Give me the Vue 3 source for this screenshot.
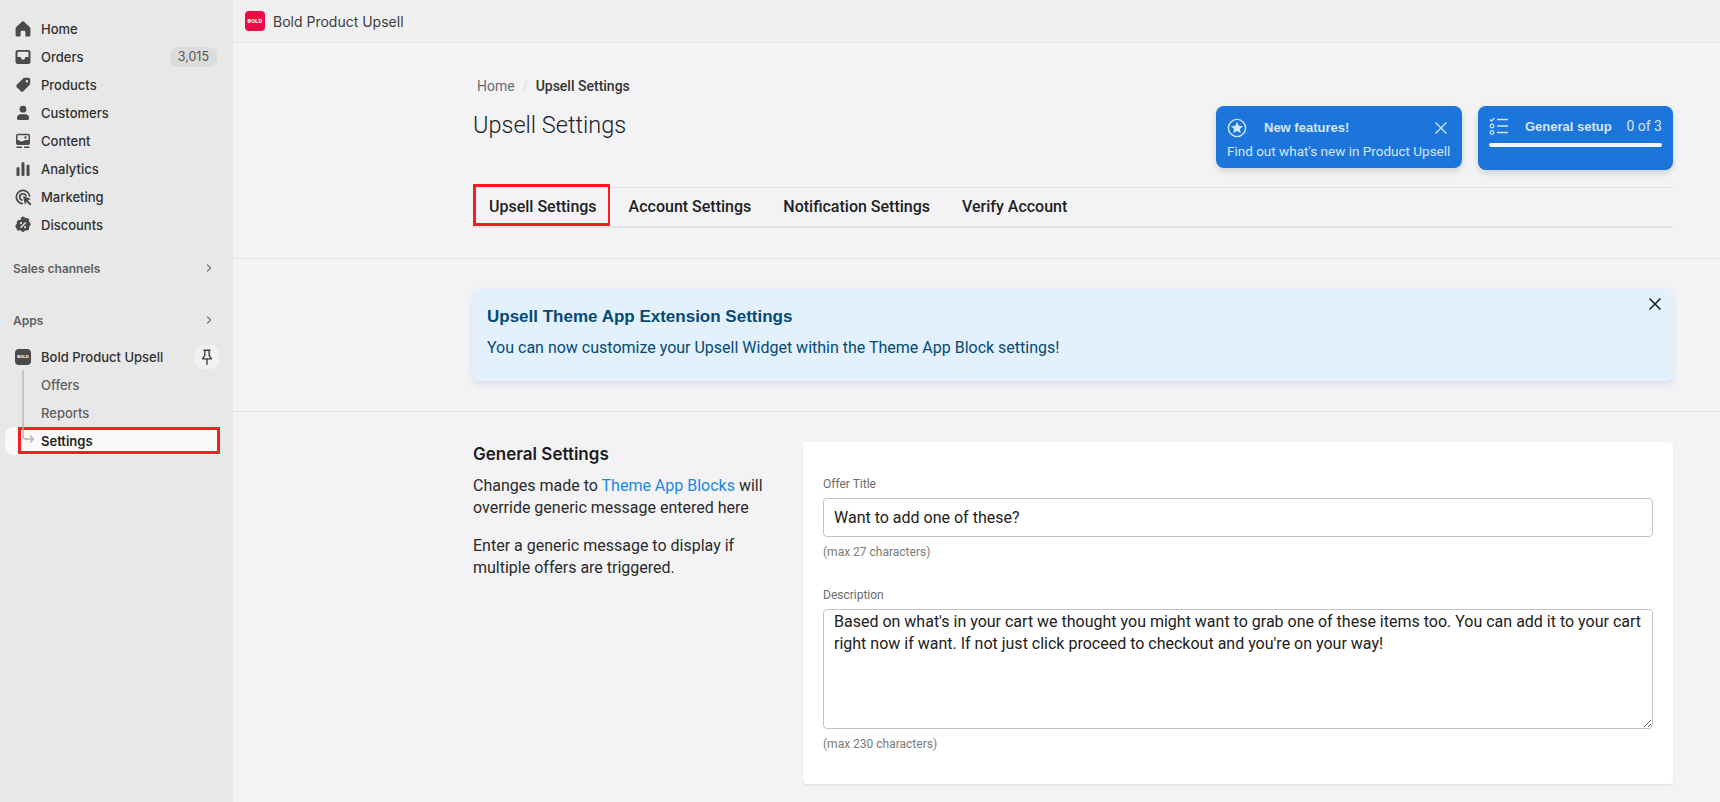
<template>
  <div class="page">
    <aside class="sidebar">
      <nav class="nav-main">
        <a v-for="item in navItems" :key="item.label" class="nav-item">
          <svg class="nav-icon" viewBox="0 0 20 20"><path :d="item.icon" fill="#4a4a4a" fill-rule="evenodd" /></svg>
          <span class="nav-label">{{ item.label }}</span>
          <span v-if="item.badge" class="badge">{{ item.badge }}</span>
        </a>
      </nav>

      <div class="section-head sales">
        <span>Sales channels</span>
        <svg viewBox="0 0 20 20" class="chev"><path d="M8 6l4 4-4 4" fill="none" stroke="#6b6b6b" stroke-width="1.4" stroke-linecap="round" stroke-linejoin="round" /></svg>
      </div>
      <div class="section-head apps">
        <span>Apps</span>
        <svg viewBox="0 0 20 20" class="chev"><path d="M8 6l4 4-4 4" fill="none" stroke="#6b6b6b" stroke-width="1.4" stroke-linecap="round" stroke-linejoin="round" /></svg>
      </div>

      <div class="app-block">
        <div class="app-row">
          <span class="app-logo"><span>BOLD</span></span>
          <span class="app-name">Bold Product Upsell</span>
          <span class="pin">
            <svg viewBox="0 0 20 20" width="18" height="18"><path d="M6.500 2.500h7M7.800 2.500l-.3 6-2.500 3.500h10l-2.500-3.500-.3-6M10 12v6" fill="none" stroke="#3a3a3a" stroke-width="1.500" stroke-linecap="round" stroke-linejoin="round" /></svg>
          </span>
        </div>
        <div class="sub-list">
          <svg class="tree" viewBox="0 0 20 74" width="20" height="74"><path d="M3 0V66.500Q3 69 6 69H13M10 65.500l3.500 3.500-3.500 3.500" fill="none" stroke="#b2b2b2" stroke-width="1.300" /></svg>
          <a class="sub-item">Offers</a>
          <a class="sub-item">Reports</a>
          <a class="sub-item active">Settings</a>
          <span class="mark-settings"></span>
        </div>
      </div>
    </aside>

    <div class="main">
      <header class="topbar">
        <span class="top-logo"><span>BOLD</span></span>
        <span class="top-title">Bold Product Upsell</span>
      </header>

      <section class="head-section">
        <div class="wrap">
          <div class="crumbs">
            <span class="crumb-home">Home</span>
            <span class="crumb-sep">/</span>
            <span class="crumb-now">Upsell Settings</span>
          </div>
          <div class="title-row">
            <h1>Upsell Settings</h1>
            <div class="promo-group">
              <div class="promo features">
                <div class="promo-top">
                  <svg viewBox="0 0 20 20" width="20" height="20"><circle cx="10" cy="10" r="8.600" fill="none" stroke="#d6e6fa" stroke-width="1.400" /><path d="M10 3.800l1.800 3.900 4.200.5-3.100 2.800.9 4.100-3.800-2.100-3.800 2.100.9-4.100-3.100-2.800 4.200-.5z" fill="#d6e6fa" /></svg>
                  <strong>New features!</strong>
                  <svg class="promo-x" viewBox="0 0 14 14" width="14" height="14"><path d="M1.500 1.500l11 11M12.500 1.500l-11 11" stroke="#d6e6fa" stroke-width="1.300" /></svg>
                </div>
                <p>Find out what's new in Product Upsell</p>
              </div>
              <div class="promo setup">
                <div class="setup-top">
                  <svg viewBox="0 0 20 18" width="20" height="18"><path d="M1 2.500l1.500 1.500 3-3M8 2.500h11M8 9h11M8 15.500h11" fill="none" stroke="#d6e6fa" stroke-width="1.300" /><circle cx="3" cy="9" r="1.800" fill="none" stroke="#d6e6fa" stroke-width="1.200" /><circle cx="3" cy="15.500" r="1.800" fill="none" stroke="#d6e6fa" stroke-width="1.200" /></svg>
                  <strong>General setup</strong>
                  <span>0 of 3</span>
                </div>
                <div class="setup-bar"></div>
              </div>
            </div>
          </div>
          <div class="tabs">
            <a v-for="(tab, i) in tabs" :key="tab" class="tab" :class="{ marked: i === 0 }">{{ tab }}</a>
          </div>
        </div>
      </section>

      <section class="banner-section">
        <div class="wrap">
          <div class="banner">
            <h2>Upsell Theme App Extension Settings</h2>
            <p>You can now customize your Upsell Widget within the Theme App Block settings!</p>
            <svg class="banner-x" viewBox="0 0 14 14" width="14" height="14"><path d="M1.500 1.500l11 11M12.500 1.500l-11 11" stroke="#1c1c1c" stroke-width="1.500" /></svg>
          </div>
        </div>
      </section>

      <section class="settings-section">
        <div class="wrap settings-grid">
          <div class="settings-text">
            <h3>General Settings</h3>
            <p>Changes made to <a>Theme App Blocks</a> will override generic message entered here</p>
            <p>Enter a generic message to display if multiple offers are triggered.</p>
          </div>
          <div class="card">
            <label class="field">
              <span class="field-label">Offer Title</span>
              <input type="text" value="Want to add one of these?" />
              <span class="hint">(max 27 characters)</span>
            </label>
            <label class="field">
              <span class="field-label">Description</span>
              <textarea v-model="description"></textarea>
              <span class="hint">(max 230 characters)</span>
            </label>
          </div>
        </div>
      </section>
    </div>
  </div>
</template>

<script setup>
import { ref } from 'vue'

const navItems = [
  { label: 'Home', icon: 'M10.800 2.600a1.200 1.200 0 0 0-1.600 0L3.300 7.900A2 2 0 0 0 2.600 9.400V16a1.600 1.600 0 0 0 1.600 1.600h2.600a.8.8 0 0 0 .8-.8v-3.600a1.400 1.400 0 0 1 1.400-1.400h2a1.400 1.400 0 0 1 1.400 1.400v3.600a.8.8 0 0 0 .8.8h2.600a1.600 1.600 0 0 0 1.600-1.600V9.400a2 2 0 0 0-.7-1.500z' },
  { label: 'Orders', badge: '3,015', icon: 'M5 3h10a2.500 2.500 0 0 1 2.500 2.500v9A2.500 2.500 0 0 1 15 17H5a2.500 2.500 0 0 1-2.500-2.500v-9A2.500 2.500 0 0 1 5 3zM5.500 4.800a1 1 0 0 0-1 1V10h2.700a.8.8 0 0 1 .8.8 2 2 0 0 0 4 0 .8.8 0 0 1 .8-.8h2.700V5.800a1 1 0 0 0-1-1z' },
  { label: 'Products', icon: 'M11.500 2.800h4a1.700 1.700 0 0 1 1.700 1.700v4a2 2 0 0 1-.6 1.400l-6.300 6.300a1.800 1.800 0 0 1-2.500 0l-4-4a1.800 1.800 0 0 1 0-2.500l6.300-6.300a2 2 0 0 1 1.400-.6zM14 5a1.200 1.200 0 1 0 0 2.400A1.200 1.200 0 0 0 14 5z' },
  { label: 'Customers', icon: 'M10 2.800a3.400 3.400 0 1 1 0 6.800 3.400 3.400 0 0 1 0-6.800zM4 15a3.800 3.800 0 0 1 3.800-3.800h4.400A3.800 3.800 0 0 1 16 15v.4a1.600 1.600 0 0 1-1.600 1.600H5.600A1.600 1.600 0 0 1 4 15.400z' },
  { label: 'Content', icon: 'M5 2.800h10a2 2 0 0 1 2 2V12a2 2 0 0 1-2 2H5a2 2 0 0 1-2-2V4.800a2 2 0 0 1 2-2zM4.500 4.800V9c2 0 2.500 1.500 4 1.500 2 0 2.500-1.500 4.500-1.500h2.500V4.800a.5.5 0 0 0-.5-.5H5a.5.5 0 0 0-.5.5zM12.500 5.200a1.200 1.200 0 1 1 0 2.400 1.200 1.200 0 0 1 0-2.400zM3.500 15.500h5.500v1.400H3.500zM11 15.500h5.500v1.400H11z' },
  { label: 'Analytics', icon: 'M8.500 4.500a1.500 1.500 0 0 1 3 0v11.500a1 1 0 0 1-1 1h-1a1 1 0 0 1-1-1zM3.500 9.500a1.500 1.500 0 0 1 3 0v6.500a1 1 0 0 1-1 1h-1a1 1 0 0 1-1-1zM13.500 7a1.500 1.500 0 0 1 3 0v9a1 1 0 0 1-1 1h-1a1 1 0 0 1-1-1z' },
  { label: 'Marketing', icon: 'M10 2.500a7.500 7.500 0 0 1 7.500 7.300h-1.700A5.800 5.800 0 1 0 9.900 15.800v1.700A7.500 7.500 0 0 1 10 2.500zM10 6a4 4 0 0 1 4 3.500h-1.700A2.400 2.400 0 1 0 9.700 12.400v1.600A4 4 0 0 1 10 6zM10 9l8 3-3.200 1.300L18.400 17l-1.400 1.400-3.600-3.600L12 18z' },
  { label: 'Discounts', icon: 'M8.300 2.300a2.400 2.400 0 0 1 3.400 0l.8.8 1.200-.1a2.400 2.400 0 0 1 2.500 2.500l-.1 1.200.8.8a2.400 2.400 0 0 1 0 3.400l-.8.8.1 1.200a2.400 2.400 0 0 1-2.500 2.500l-1.200-.1-.8.8a2.400 2.400 0 0 1-3.400 0l-.8-.8-1.200.1A2.400 2.400 0 0 1 3.800 14.900l.1-1.200-.8-.8a2.400 2.400 0 0 1 0-3.400l.8-.8-.1-1.200A2.400 2.400 0 0 1 6.300 5l1.200.1zM12.200 7L7 12.200l1 1L13.200 8zM8 7a1.100 1.100 0 1 0 0 2.200A1.100 1.100 0 0 0 8 7zM12 11a1.100 1.100 0 1 0 0 2.200 1.100 1.100 0 0 0 0-2.200z' },
]

const tabs = ['Upsell Settings', 'Account Settings', 'Notification Settings', 'Verify Account']

const description = ref("Based on what's in your cart we thought you might want to grab one of these items too. You can add it to your cart right now if want. If not just click proceed to checkout and you're on your way!")
</script>

<style>
html, body { margin: 0; background: #f3f3f6; overflow: hidden; }
</style>

<style scoped>
.page {
  display: flex;
  height: 802px;
  overflow: hidden;
  font-family: Roboto, "Liberation Sans", sans-serif;
}

/* sidebar */
.sidebar {
  width: 233px;
  flex: none;
  background: #e8e8e8;
  padding-top: 15px;
  box-sizing: border-box;
  font-family: Inter, "Liberation Sans", sans-serif;
  font-size: 13px;
  font-weight: 500;
  color: #303030;
}
.nav-item {
  display: flex;
  align-items: center;
  height: 28px;
  padding: 0 16px 0 13px;
}
.nav-icon { width: 20px; height: 20px; margin-right: 8px; flex: none; }
.nav-label { flex: 1; }
.badge {
  background: #dcdcdc;
  color: #555;
  font-size: 12.500px;
  font-weight: 400;
  border-radius: 8px;
  height: 20px;
  line-height: 20px;
  padding: 0 8px;
}
.section-head {
  display: flex;
  justify-content: space-between;
  align-items: center;
  height: 24px;
  padding: 0 16px 0 13px;
  font-size: 12px;
  font-weight: 600;
  color: #616161;
}
.sales { margin-top: 17px; }
.apps { margin-top: 28px; }
.chev { width: 16px; height: 16px; }
.app-block { margin-top: 11px; }
.app-row {
  display: flex;
  align-items: center;
  height: 28px;
  padding: 0 14px 0 15px;
}
.app-logo {
  width: 16px;
  height: 16px;
  border-radius: 4px;
  background: #4a4a4a;
  display: flex;
  align-items: center;
  justify-content: center;
  margin-right: 10px;
  flex: none;
}
.app-logo span {
  font-size: 4px;
  line-height: 1;
  font-weight: 800;
  color: #fff;
  letter-spacing: .2px;
}
.app-name { flex: 1; }
.pin {
  width: 24px;
  height: 24px;
  border-radius: 8px;
  background: #f1f1f1;
  display: flex;
  align-items: center;
  justify-content: center;
}
.sub-list { position: relative; }
.tree { position: absolute; left: 20px; top: -1px; z-index: 2; }
.sub-item {
  display: block;
  height: 28px;
  line-height: 28px;
  color: #616161;
  font-weight: 500;
  margin: 0 13px 0 5px;
  padding-left: 36px;
  border-radius: 8px 0 0 8px;
}
.sub-item.active {
  background: #f9f9f9;
  color: #1f1f1f;
  font-weight: 600;
}
.mark-settings {
  position: absolute;
  left: 18px;
  top: 56px;
  width: 202px;
  height: 27px;
  box-sizing: border-box;
  border: 3px solid #fb1a22;
}

/* main */
.main { flex: 1; min-width: 0; background: #f3f3f6; }
.topbar {
  height: 43px;
  background: #f0f0f0;
  border-bottom: 1px solid #e6e6ea;
  box-sizing: border-box;
  display: flex;
  align-items: center;
  padding-left: 12px;
  font-family: Inter, "Liberation Sans", sans-serif;
}
.top-logo {
  width: 20px;
  height: 20px;
  border-radius: 4px;
  background: #ee0a47;
  display: flex;
  align-items: center;
  justify-content: center;
  margin-right: 8px;
}
.top-logo span {
  font-size: 5px;
  font-weight: 800;
  color: #fff;
  letter-spacing: .3px;
  line-height: 1;
}
.top-title { font-size: 14px; color: #3c3c3c; }
.wrap { margin-left: 240px; width: 1200px; }

.head-section {
  height: 216px;
  border-bottom: 1px solid #dfe3e5;
  box-sizing: border-box;
  padding-top: 35px;
}
.crumbs {
  display: flex;
  align-items: center;
  height: 16px;
  font-size: 14px;
  padding-left: 4px;
}
.crumb-home { color: #6b6b6b; }
.crumb-sep { color: #d8d8d8; margin: 0 8px; font-size: 12px; }
.crumb-now { color: #333; font-weight: 500; font-size: 14px; }
.title-row {
  display: flex;
  justify-content: space-between;
  align-items: flex-start;
  height: 88px;
  margin-top: 5px;
}
h1 {
  margin: 11px 0 0;
  font-size: 23.500px;
  line-height: 30px;
  font-weight: 300;
  color: #212121;
}
.promo-group { display: flex; gap: 16px; align-items: flex-start; margin-top: 7px; }
.promo {
  background: #1b75db;
  color: #d6e6fa;
  border-radius: 8px;
  box-sizing: border-box;
  box-shadow: 0 3px 6px rgba(0, 0, 0, .14);
}
.features { width: 246px; height: 62px; padding: 12px 12px 0 11px; }
.promo-top { display: flex; align-items: center; height: 20px; }
.promo-top strong { font-size: 13px; font-weight: 700; margin-left: 17px; padding-bottom: 2px; flex: 1; font-family: "Liberation Sans", sans-serif; }
.promo-x { margin-right: 2px; }
.features p { margin: 5px 0 0; font-size: 13.500px; line-height: 16px; white-space: nowrap; }
.setup { width: 195px; height: 64px; padding: 11px 11px 0 11px; }
.setup-top { display: flex; align-items: center; height: 18px; font-size: 14px; }
.setup-top strong { flex: 1; margin-left: 16px; font-size: 13px; font-weight: 700; font-family: "Liberation Sans", sans-serif; }
.setup-bar { height: 4px; border-radius: 2px; background: #f4f8fe; margin-top: 8px; }
.tabs {
  display: flex;
  height: 41px;
  border-top: 1px solid #e3e3e6;
  border-bottom: 2px solid #e1e5e7;
  box-sizing: border-box;
}
.tab {
  position: relative;
  display: flex;
  align-items: center;
  height: 36px;
  padding: 0 16px;
  font-size: 16px;
  font-weight: 500;
  color: #1e1e1e;
  box-sizing: border-box;
  white-space: nowrap;
}
.tab.marked::after {
  content: '';
  position: absolute;
  left: 0;
  right: 3px;
  top: -4px;
  bottom: -2px;
  border: 3px solid #fb1a22;
  border-right-width: 2px;
}

.banner-section {
  height: 153px;
  border-bottom: 1px solid #dfe3e5;
  box-sizing: border-box;
  padding-top: 30px;
}
.banner {
  position: relative;
  height: 92px;
  box-sizing: border-box;
  background: #e3f1fe;
  border-radius: 6px;
  box-shadow: 0 3px 6px rgba(60, 60, 110, .12);
  padding: 17px 14px;
  color: #044a74;
}
.banner h2 { margin: 0; font-size: 17px; line-height: 22px; font-weight: 700; font-family: "Liberation Sans", sans-serif; }
.banner p { margin: 10px 0 0; font-size: 16px; line-height: 20px; }
.banner-x { position: absolute; right: 11px; top: 8px; }

.settings-section { padding-top: 30px; }
.settings-grid { display: grid; grid-template-columns: 330px 870px; }
.settings-text { font-size: 16px; line-height: 22px; color: #2a2a2a; padding-top: 1px; }
.settings-text h3 {
  margin: 0 0 10px;
  font-size: 17px;
  line-height: 22px;
  font-weight: 600;
  color: #1c1c1c;
  font-family: Inter, "Liberation Sans", sans-serif;
}
.settings-text p { margin: 0 0 16px; width: 300px; }
.settings-text a { color: #1989e8; }
.card {
  background: #fff;
  border-radius: 4px;
  height: 342px;
  box-sizing: border-box;
  padding: 35px 20px 0;
  box-shadow: 0 1px 2px rgba(0, 0, 0, .08);
}
.field { display: block; margin-bottom: 29px; }
.field-label {
  display: block;
  font-size: 12px;
  line-height: 14px;
  color: #6b6b6b;
  margin-bottom: 7px;
}
input, textarea {
  display: block;
  width: 100%;
  box-sizing: border-box;
  border: 1px solid #c4c4c4;
  border-radius: 4px;
  background: #fff;
  color: #212121;
  font-family: Roboto, "Liberation Sans", sans-serif;
  font-size: 16px;
  padding: 0 10px;
  outline: none;
}
input { height: 39px; }
textarea { height: 120px; line-height: 22px; padding-top: 1px; resize: vertical; }
.hint {
  display: block;
  font-size: 12px;
  line-height: 14px;
  color: #7a7a7a;
  margin-top: 8px;
}
</style>
